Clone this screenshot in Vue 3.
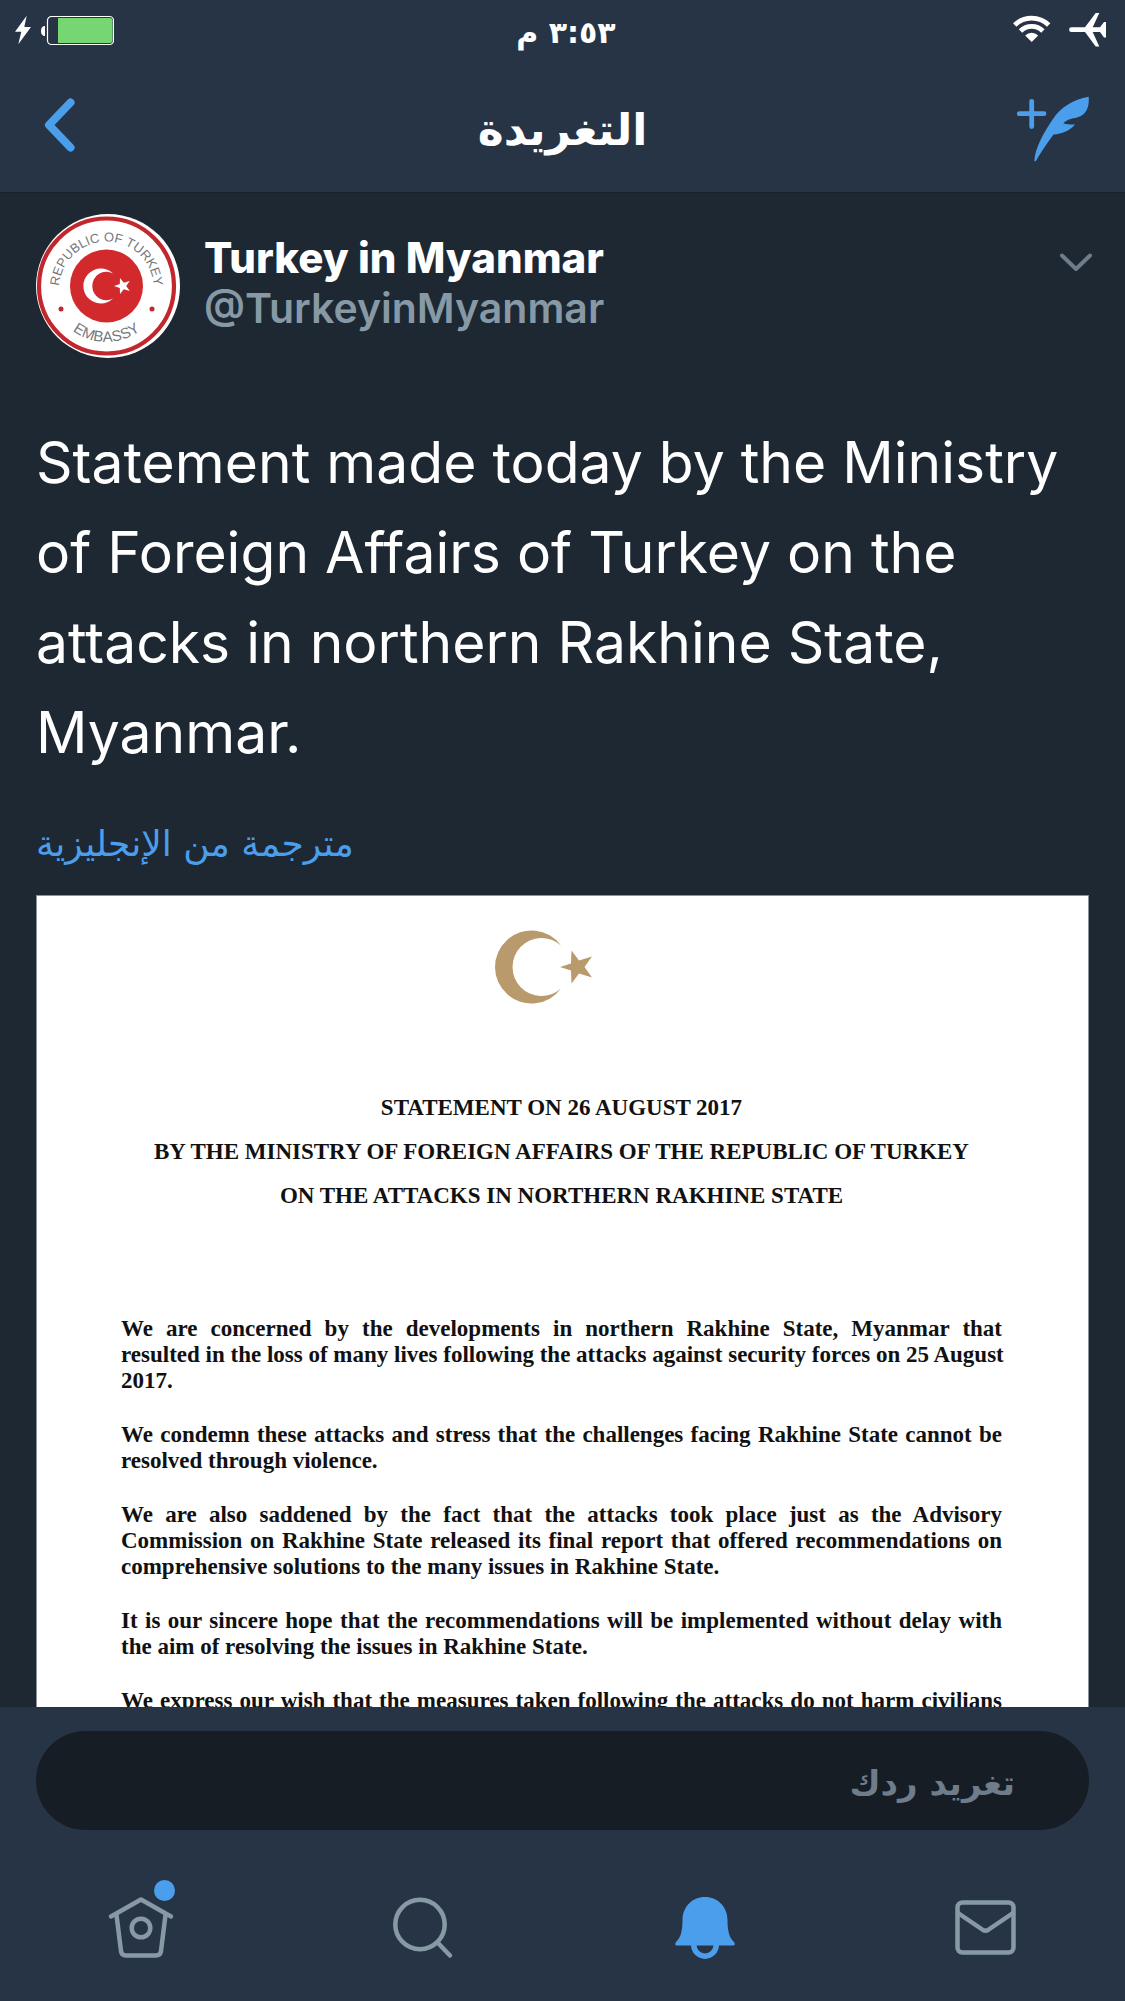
<script setup>
import { ref } from 'vue'

const reply = ref('')
const activeTab = ref('notifications')

const tweet = {
  name: 'Turkey in Myanmar',
  handle: '@TurkeyinMyanmar',
  text: 'Statement made today by the Ministry of Foreign Affairs of Turkey on the attacks in northern Rakhine State, Myanmar.'
}

const headings = [
  'STATEMENT ON 26 AUGUST 2017',
  'BY THE MINISTRY OF FOREIGN AFFAIRS OF THE REPUBLIC OF TURKEY',
  'ON THE ATTACKS IN NORTHERN RAKHINE STATE'
]

// the statement is a fixed page, so each paragraph keeps its printed lines
const paragraphs = [
  [
    'We are concerned by the developments in northern Rakhine State, Myanmar that',
    'resulted in the loss of many lives following the attacks against security forces on 25 August',
    '2017.'
  ],
  [
    'We condemn these attacks and stress that the challenges facing Rakhine State cannot be',
    'resolved through violence.'
  ],
  [
    'We are also saddened by the fact that the attacks took place just as the Advisory',
    'Commission on Rakhine State released its final report that offered recommendations on',
    'comprehensive solutions to the many issues in Rakhine State.'
  ],
  [
    'It is our sincere hope that the recommendations will be implemented without delay with',
    'the aim of resolving the issues in Rakhine State.'
  ],
  ['We express our wish that the measures taken following the attacks do not harm civilians', '']
]
</script>

<template>
  <div class="screen">
    <header class="header">
      <div class="status-bar">
        <div class="status-side">
          <svg width="20" height="32" viewBox="0 0 20 32" fill="#fff">
            <path d="M12.7 1.7 L1 17.7 H7.3 L4.3 30.3 L17 13 H10.3 Z" />
          </svg>
          <svg width="75" height="32" viewBox="0 0 75 32">
            <path d="M6 12 V22 C3 22 2 19.500 2 17 C2 14.500 3 12 6 12 Z" fill="#fff" />
            <rect x="8.500" y="2.500" width="66" height="28" rx="4" fill="none" stroke="#fff" stroke-width="1.200" />
            <path d="M19 4 H71 Q73.500 4 73.500 7 V26 Q73.500 29 71 29 H19 Z" fill="#76d672" />
          </svg>
        </div>
        <span class="time" dir="rtl">٣:٥٣ م</span>
        <div class="status-side right">
          <svg width="40" height="34" viewBox="0 0 40 34">
            <g fill="none" stroke="#fff">
              <path d="M2.700 12 A24.500 24.500 0 0 1 36.700 12" stroke-width="4.800" />
              <path d="M8.500 18 A16 16 0 0 1 30.900 18" stroke-width="4.800" />
            </g>
            <path d="M19.700 29 L13.200 22.500 A9.300 9.300 0 0 1 26.200 22.500 Z" fill="#fff" />
          </svg>
          <svg width="40" height="36" viewBox="0 0 40 36" fill="#fff">
            <path d="M3.500 15.300 H17 L27.700 1 H31.300 L24.700 15.300 H32 L36 10 H38 V25.400 H36 L32 20.100 H24.700 L31.300 34.400 H27.700 L17 20.100 H3.500 A2.400 2.400 0 0 1 3.500 15.300 Z" />
          </svg>
        </div>
      </div>
      <div class="nav-bar">
        <button class="icon-btn back" type="button" aria-label="رجوع">
          <svg width="32" height="56" viewBox="0 0 32 56" fill="none" stroke="#4b9eec" stroke-width="8" stroke-linecap="round" stroke-linejoin="round">
            <path d="M26.500 4.500 L5 27 L26.500 49.500" />
          </svg>
        </button>
        <h1 class="title" dir="rtl">التغريدة</h1>
        <button class="icon-btn compose" type="button" aria-label="تغريدة جديدة">
          <svg width="73" height="66" viewBox="0 0 73 66">
            <path d="M2.300 17.700 H27 M14.700 5.300 V30.500" stroke="#4b9eec" stroke-width="4.800" stroke-linecap="round" />
            <path fill="#4b9eec" d="M71.700 .7 C56 3 43 12 36 23 C27 36 18 52 17.300 65 C17.600 65.600 18.600 65.400 19.300 64.600 C24 56 31 46 36.500 38.500 C45 38 53 34.500 58 28.500 C54 28.600 50 28.500 46.300 27.200 C50 23.500 55 22.500 60 21.500 C70 19 72.500 10 71.700 .7 Z" />
          </svg>
        </button>
      </div>
    </header>

    <main class="content">
      <article class="tweet">
        <div class="author">
          <svg class="avatar" viewBox="-72 -72 144 144" role="img" aria-label="Turkey in Myanmar">
            <defs>
              <path id="arc-top" d="M-49 3 A47.500 47.500 0 1 1 46 3" />
              <path id="arc-bottom" d="M-57.500 0 A56 56 0 0 0 54.500 0" />
            </defs>
            <circle r="72" fill="#fff" />
            <circle cx="-1.500" r="67.500" fill="none" stroke="#c1272d" stroke-width="4.200" />
            <circle cx="-1.500" r="36.500" fill="#d22a2c" />
            <path fill="#fff" d="M5 -12.600 A17.500 17.500 0 1 0 5 12.600 A14.200 14.200 0 1 1 5 -12.600 Z" />
            <path fill="#fff" d="M6 0 L11.800 -2 L12 -8 L15.800 -3.200 L21.800 -5 L18.200 0 L21.800 5 L15.800 3.200 L12 8 L11.800 2 Z" />
            <circle cx="-47" cy="23" r="2.500" fill="#c1272d" />
            <circle cx="44" cy="23" r="2.500" fill="#c1272d" />
            <text class="seal-text">
              <textPath href="#arc-top" startOffset="50%" text-anchor="middle">REPUBLIC OF TURKEY</textPath>
            </text>
            <text class="seal-text large">
              <textPath href="#arc-bottom" startOffset="50%" text-anchor="middle">EMBASSY</textPath>
            </text>
          </svg>
          <div class="names">
            <span class="name">{{ tweet.name }}</span>
            <span class="handle">{{ tweet.handle }}</span>
          </div>
          <button class="icon-btn more" type="button" aria-label="المزيد">
            <svg width="32" height="20" viewBox="0 0 32 20" fill="none" stroke="#6f7c89" stroke-width="4" stroke-linecap="round" stroke-linejoin="round">
              <path d="M2 2.500 L16 16 L30 2.500" />
            </svg>
          </button>
        </div>

        <p class="tweet-text">{{ tweet.text }}</p>
        <a class="translate" href="#" dir="rtl">مترجمة من الإنجليزية</a>

        <section class="document">
          <svg class="emblem" width="97" height="74" viewBox="0 0 97 74" fill="#b89a6c">
            <path d="M66 15.500 A36.500 36.500 0 1 0 66 58.500 A29 29 0 1 1 66 15.500 Z" />
            <path d="M65 37 L76 33.500 L76.500 20.500 L84 30.500 L97 26.500 L89.500 37 L97 47.500 L84 43.500 L76.500 53.500 L76 40.500 Z" />
          </svg>
          <div class="doc-headings">
            <p v-for="line in headings" :key="line">{{ line }}</p>
          </div>
          <div class="doc-body">
            <p v-for="(lines, i) in paragraphs" :key="i">
              <span v-for="(line, n) in lines" :key="n" class="doc-line">{{ line }}</span>
            </p>
          </div>
        </section>
      </article>
    </main>

    <footer class="footer">
      <div class="reply-row">
        <input v-model="reply" class="reply" type="text" dir="rtl" placeholder="تغريد ردك" aria-label="تغريد ردك">
      </div>
      <nav class="tabs">
        <button class="tab" type="button" aria-label="الرئيسية" @click="activeTab = 'home'">
          <span class="tab-icon" :class="{ active: activeTab === 'home' }">
            <svg viewBox="0 0 80 80" class="line-icon">
              <path d="M10 29.500 L40 12.500 L70 29.500" />
              <path d="M15.500 28 L20 64 Q20.500 68.500 25 68.500 H55 Q59.500 68.500 60 64 L64.500 28" />
              <circle cx="40" cy="41" r="9.300" />
            </svg>
            <span class="badge"></span>
          </span>
        </button>
        <button class="tab" type="button" aria-label="بحث" @click="activeTab = 'search'">
          <span class="tab-icon" :class="{ active: activeTab === 'search' }">
            <svg viewBox="0 0 80 80" class="line-icon">
              <circle cx="38" cy="37.500" r="24.700" />
              <path d="M56 56 L68 68.500" />
            </svg>
          </span>
        </button>
        <button class="tab" type="button" aria-label="التنبيهات" @click="activeTab = 'notifications'">
          <span class="tab-icon" :class="{ active: activeTab === 'notifications' }">
            <svg viewBox="0 0 80 80">
              <path fill="currentColor" d="M42 10 C55 10 64.500 20 64.500 33 C64.500 46 67 51 71 55 Q73 58.500 70 58.500 H14 Q11 58.500 13 55 C17 51 19.500 46 19.500 33 C19.500 20 29 10 42 10 Z" />
              <path fill="none" stroke="currentColor" stroke-width="5.500" d="M30.800 57 V58 A11.200 11.200 0 0 0 53.200 58 V57" />
            </svg>
          </span>
        </button>
        <button class="tab" type="button" aria-label="الرسائل" @click="activeTab = 'messages'">
          <span class="tab-icon" :class="{ active: activeTab === 'messages' }">
            <svg viewBox="0 0 80 80" class="line-icon">
              <rect x="13.500" y="15.500" width="56" height="50" rx="5" />
              <path d="M14 26 L39 43 Q41.500 44.500 44 43 L69 26" />
            </svg>
          </span>
        </button>
      </nav>
    </footer>
  </div>
</template>

<style>
body {
  margin: 0;
  background: #1d2833;
}
</style>

<style scoped>
.screen {
  display: flex;
  flex-direction: column;
  height: 100vh;
  overflow: hidden;
  background: #1d2833;
  color: #fff;
  font-family: Inter, "DejaVu Sans", sans-serif;
}

button {
  padding: 0;
  border: none;
  background: none;
  cursor: pointer;
}

svg {
  display: block;
}

.header {
  background: #273445;
  border-bottom: 1px solid #18212b;
}

.status-bar {
  display: flex;
  align-items: center;
  height: 60px;
  padding: 0 17px 0 14px;
}

.status-side {
  display: flex;
  flex: 1;
  align-items: center;
  gap: 5px;
}

.status-side.right {
  justify-content: flex-end;
  gap: 16px;
}

.time {
  padding: 6px 0 0 10px;
  font-family: "DejaVu Sans", sans-serif;
  font-size: 30px;
  font-weight: 700;
  line-height: 36px;
}

.nav-bar {
  display: grid;
  grid-template-columns: 1fr auto 1fr;
  align-items: center;
  height: 132px;
  padding: 0 35px;
}

.icon-btn {
  justify-self: start;
}

.back {
  padding-left: 9px;
}

.compose {
  justify-self: end;
  padding-top: 6px;
}

.title {
  margin: 0;
  padding-top: 8px;
  font-family: "DejaVu Sans", sans-serif;
  font-size: 44px;
  line-height: 60px;
}

.content {
  flex: 1;
  min-height: 0;
  overflow: hidden;
}

.tweet {
  padding: 21px 36px 0;
}

.author {
  display: flex;
  align-items: flex-start;
  gap: 24px;
}

.avatar {
  width: 144px;
  height: 144px;
}

.seal-text {
  fill: #77787c;
  font-family: "Liberation Sans", Arial, sans-serif;
  font-size: 13px;
}

.seal-text.large {
  font-size: 15px;
}

.names {
  display: flex;
  flex: 1;
  flex-direction: column;
  padding-top: 18px;
  line-height: 51px;
}

.name {
  font-size: 42px;
  font-weight: 800;
}

.handle {
  color: #8899a6;
  font-size: 41px;
  font-weight: 600;
}

.more {
  margin: 39px -3px 0 0;
}

.tweet-text {
  margin: 60px 0 0;
  font-size: 57px;
  line-height: 90px;
}

.translate {
  display: block;
  width: fit-content;
  margin-top: 42px;
  color: #4b9eec;
  font-family: "DejaVu Sans", sans-serif;
  font-size: 36px;
  line-height: 48px;
  text-decoration: none;
}

.document {
  display: flex;
  flex-direction: column;
  margin-top: 27px;
  padding: 34px 86px 60px 84px;
  border: 1px solid #8b9197;
  background: #fff;
  color: #111;
  font-family: "Liberation Serif", "Times New Roman", serif;
  font-weight: 700;
}

.emblem {
  align-self: center;
  margin-right: 36px;
}

.doc-headings {
  margin-top: 82px;
  font-size: 23px;
  line-height: 44px;
  text-align: center;
}

.doc-headings p {
  margin: 0;
}

.doc-body {
  display: flex;
  flex-direction: column;
  gap: 28px;
  margin-top: 98px;
  font-size: 23px;
  line-height: 26px;
}

.doc-body p {
  margin: 0;
}

.doc-line {
  display: block;
  text-align: justify;
  text-align-last: justify;
  white-space: nowrap;
}

.doc-line:last-child {
  text-align-last: left;
}

.footer {
  background: #273445;
}

.reply-row {
  padding: 24px 36px 0;
}

.reply {
  display: block;
  box-sizing: border-box;
  width: 100%;
  height: 99px;
  padding: 4px 74px 0;
  border: none;
  border-radius: 50px;
  outline: none;
  background: #171d25;
  color: #fff;
  font-family: "DejaVu Sans", sans-serif;
  font-size: 34px;
  font-weight: 700;
}

.reply::placeholder {
  color: #6f7c89;
  opacity: 1;
}

.tabs {
  display: flex;
  height: 171px;
}

.tab {
  display: flex;
  flex: 1;
  justify-content: center;
  padding-top: 57px;
}

.tab-icon {
  position: relative;
  width: 80px;
  height: 80px;
  color: #8899a6;
}

.tab-icon.active {
  color: #4b9eec;
}

.line-icon {
  fill: none;
  stroke: currentColor;
  stroke-width: 4.5px;
  stroke-linecap: round;
  stroke-linejoin: round;
}

.badge {
  position: absolute;
  top: -7px;
  right: 6px;
  width: 21px;
  height: 21px;
  border-radius: 50%;
  background: #4b9eec;
}
</style>
